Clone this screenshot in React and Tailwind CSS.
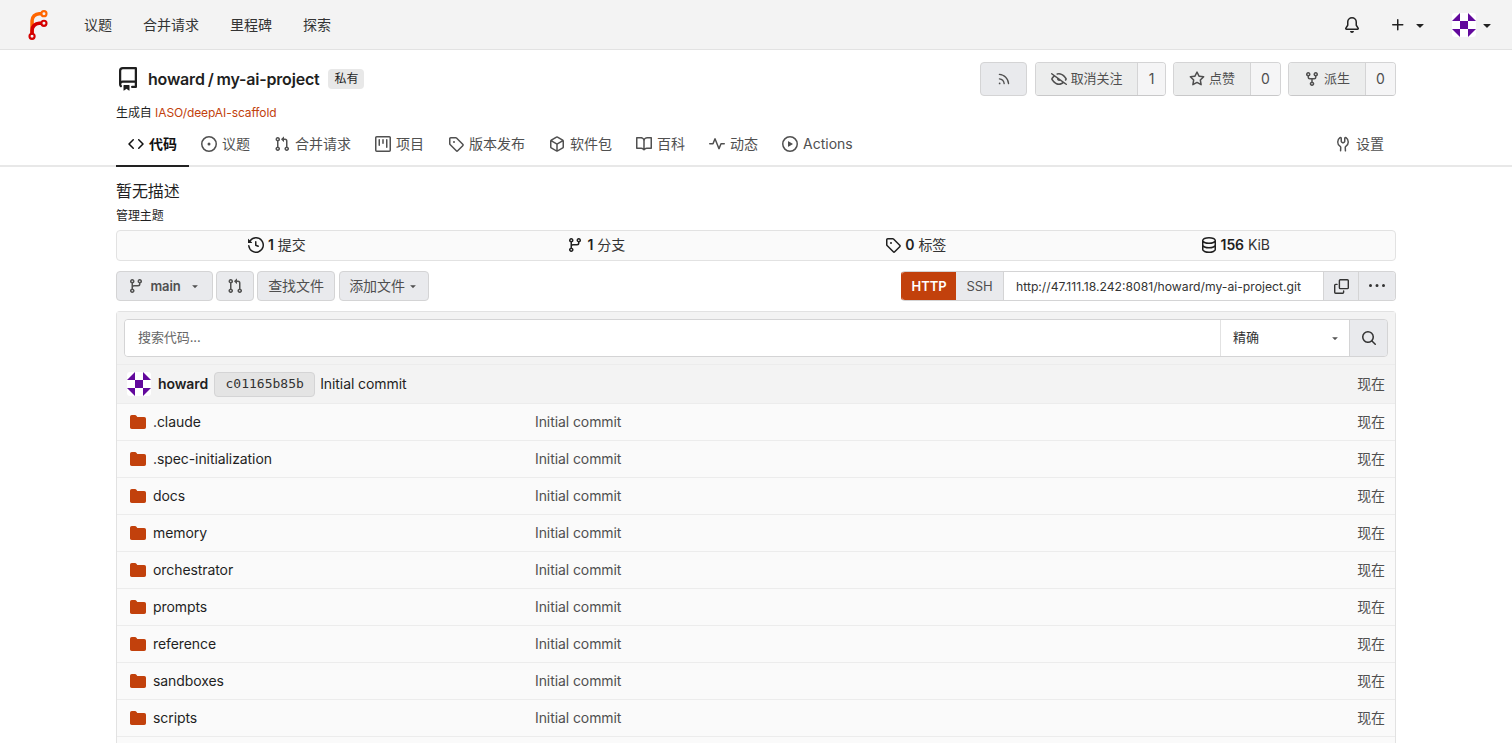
const paths = {
  repo: "M2 2.5A2.5 2.5 0 0 1 4.5 0h8.75a.75.75 0 0 1 .75.75v12.5a.75.75 0 0 1-.75.75h-2.5a.75.75 0 0 1 0-1.5h1.75v-2h-8a1 1 0 0 0-.714 1.7.75.75 0 1 1-1.072 1.05A2.5 2.5 0 0 1 2 11.5Zm10.5-1h-8a1 1 0 0 0-1 1v6.708A2.5 2.5 0 0 1 4.5 9h8ZM5 12.25a.25.25 0 0 1 .25-.25h3.5a.25.25 0 0 1 .25.25v3.25a.25.25 0 0 1-.4.2l-1.45-1.087a.25.25 0 0 0-.3 0L5.4 15.7a.25.25 0 0 1-.4-.2Z",
  code: "m11.28 3.22 4.25 4.25a.75.75 0 0 1 0 1.06l-4.25 4.25a.749.749 0 0 1-1.275-.326.749.749 0 0 1 .215-.734L13.94 8l-3.72-3.72a.749.749 0 0 1 .326-1.275.749.749 0 0 1 .734.215Zm-6.56 0a.751.751 0 0 1 1.042.018.751.751 0 0 1 .018 1.042L2.06 8l3.72 3.72a.749.749 0 0 1-.326 1.275.749.749 0 0 1-.734-.215L.47 8.53a.75.75 0 0 1 0-1.06Z",
  issue: "M8 9.5a1.5 1.5 0 1 0 0-3 1.5 1.5 0 0 0 0 3ZM8 0a8 8 0 1 1 0 16A8 8 0 0 1 8 0ZM1.5 8a6.5 6.5 0 1 0 13 0 6.5 6.5 0 0 0-13 0Z",
  pr: "M1.5 3.25a2.25 2.25 0 1 1 3 2.122v5.256a2.251 2.251 0 1 1-1.5 0V5.372A2.25 2.25 0 0 1 1.5 3.25Zm5.677-.177L9.573.677A.25.25 0 0 1 10 .854V2.5h1A2.5 2.5 0 0 1 13.5 5v5.628a2.251 2.251 0 1 1-1.5 0V5a1 1 0 0 0-1-1h-1v1.646a.25.25 0 0 1-.427.177L7.177 3.427a.25.25 0 0 1 0-.354ZM3.75 2.5a.75.75 0 1 0 0 1.5.75.75 0 0 0 0-1.5Zm0 9.5a.75.75 0 1 0 0 1.5.75.75 0 0 0 0-1.5Zm8.25.75a.75.75 0 1 0 1.5 0 .75.75 0 0 0-1.5 0Z",
  project: "M1.75 0h12.5C15.216 0 16 .784 16 1.75v12.5A1.75 1.75 0 0 1 14.25 16H1.75A1.75 1.75 0 0 1 0 14.25V1.75C0 .784.784 0 1.75 0ZM1.5 1.75v12.5c0 .138.112.25.25.25h12.5a.25.25 0 0 0 .25-.25V1.75a.25.25 0 0 0-.25-.25H1.75a.25.25 0 0 0-.25.25ZM11.75 3a.75.75 0 0 1 .75.75v7.5a.75.75 0 0 1-1.5 0v-7.5a.75.75 0 0 1 .75-.75Zm-8.25.75a.75.75 0 0 1 1.5 0v5.5a.75.75 0 0 1-1.5 0ZM8 3a.75.75 0 0 1 .75.75v3.5a.75.75 0 0 1-1.5 0v-3.5A.75.75 0 0 1 8 3Z",
  tag: "M1 7.775V2.75C1 1.784 1.784 1 2.75 1h5.025c.464 0 .91.184 1.238.513l6.25 6.25a1.75 1.75 0 0 1 0 2.474l-5.026 5.026a1.75 1.75 0 0 1-2.474 0l-6.25-6.25A1.752 1.752 0 0 1 1 7.775Zm1.5 0c0 .066.026.13.073.177l6.25 6.25a.25.25 0 0 0 .354 0l5.025-5.025a.25.25 0 0 0 0-.354l-6.25-6.25a.25.25 0 0 0-.177-.073H2.75a.25.25 0 0 0-.25.25ZM6 5a1 1 0 1 1 0 2 1 1 0 0 1 0-2Z",
  pkg: "m8.878.392 5.25 3.045c.54.314.872.89.872 1.514v6.098a1.75 1.75 0 0 1-.872 1.514l-5.25 3.045a1.75 1.75 0 0 1-1.756 0l-5.25-3.045A1.75 1.75 0 0 1 1 11.049V4.951c0-.624.332-1.201.872-1.514L7.122.392a1.75 1.75 0 0 1 1.756 0ZM7.875 1.69l-4.63 2.685L8 7.133l4.755-2.758-4.63-2.685a.248.248 0 0 0-.25 0ZM2.5 5.677v5.372c0 .09.047.171.125.216l4.625 2.683V8.432Zm6.25 8.271 4.625-2.683a.25.25 0 0 0 .125-.216V5.677L8.75 8.432Z",
  book: "M0 1.75A.75.75 0 0 1 .75 1h4.253c1.227 0 2.317.59 3 1.501A3.743 3.743 0 0 1 11.006 1h4.245a.75.75 0 0 1 .75.75v10.5a.75.75 0 0 1-.75.75h-4.507a2.25 2.25 0 0 0-1.591.659l-.622.621a.75.75 0 0 1-1.06 0l-.622-.621A2.25 2.25 0 0 0 5.258 13H.75a.75.75 0 0 1-.75-.75Zm7.251 10.324.004-5.073-.002-2.253A2.25 2.25 0 0 0 5.003 2.5H1.5v9h3.757a3.75 3.75 0 0 1 1.994.574ZM8.755 4.75l-.004 7.322a3.752 3.752 0 0 1 1.992-.572H14.5v-9h-3.495a2.25 2.25 0 0 0-2.25 2.25Z",
  pulse: "M6 2c.306 0 .582.187.696.471L10 10.731l1.304-3.26A.751.751 0 0 1 12 7h3.25a.75.75 0 0 1 0 1.5h-2.742l-1.812 4.528a.751.751 0 0 1-1.392 0L6 4.77 4.696 8.03A.75.75 0 0 1 4 8.5H.75a.75.75 0 0 1 0-1.5h2.742l1.812-4.529A.751.751 0 0 1 6 2Z",
  play: "M8 0a8 8 0 1 1 0 16A8 8 0 0 1 8 0ZM1.5 8a6.5 6.5 0 1 0 13 0 6.5 6.5 0 0 0-13 0Zm4.879-2.773 4.264 2.559a.25.25 0 0 1 0 .428l-4.264 2.559A.25.25 0 0 1 6 10.559V5.442a.25.25 0 0 1 .379-.215Z",
  tools: "M5.433 2.304A4.492 4.492 0 0 0 3.5 6c0 1.598.832 3.002 2.09 3.802.518.328.929.923.902 1.64v.008l-.164 3.337a.75.75 0 1 1-1.498-.073l.163-3.33c.002-.085-.05-.216-.207-.316A5.996 5.996 0 0 1 2 6a5.993 5.993 0 0 1 2.567-4.92 1.482 1.482 0 0 1 1.673-.04c.462.296.76.827.76 1.423v2.82c0 .082.041.16.11.206l.75.51a.25.25 0 0 0 .28 0l.75-.51A.249.249 0 0 0 9 5.282V2.463c0-.596.298-1.127.76-1.423a1.482 1.482 0 0 1 1.673.04A5.993 5.993 0 0 1 14 6a5.996 5.996 0 0 1-2.786 5.068c-.157.1-.209.23-.207.315l.163 3.33a.752.752 0 0 1-1.094.714.75.75 0 0 1-.404-.64l-.164-3.345c-.027-.717.384-1.312.902-1.64A4.495 4.495 0 0 0 12.5 6a4.492 4.492 0 0 0-1.933-3.696c-.024.017-.067.067-.067.16v2.818a1.75 1.75 0 0 1-.767 1.448l-.75.51a1.75 1.75 0 0 1-1.966 0l-.75-.51A1.75 1.75 0 0 1 5.5 5.282V2.463c0-.092-.043-.142-.067-.159Z",
  rss: "M2.002 2.725a.75.75 0 0 1 .797-.699C8.79 2.42 13.58 7.21 13.974 13.201a.75.75 0 0 1-1.497.098 10.502 10.502 0 0 0-9.776-9.776.747.747 0 0 1-.7-.798ZM2.84 7.05h-.002a7.002 7.002 0 0 1 6.113 6.111.75.75 0 0 1-1.49.178 5.503 5.503 0 0 0-4.8-4.8.75.75 0 0 1 .179-1.489ZM2 13a1 1 0 1 1 2 0 1 1 0 0 1-2 0Z",
  eyeClosed: "M.143 2.31a.75.75 0 0 1 1.047-.167l14.5 10.5a.75.75 0 1 1-.88 1.214l-2.248-1.628C11.346 13.19 9.792 14 8 14c-1.981 0-3.67-.992-4.933-2.078C1.797 10.832.88 9.577.43 8.9a1.619 1.619 0 0 1 0-1.797c.353-.533.995-1.42 1.868-2.305L.31 3.357A.75.75 0 0 1 .143 2.31Zm1.536 5.622A.12.12 0 0 0 1.657 8c0 .021.006.045.022.068.412.621 1.242 1.75 2.366 2.717C5.175 11.758 6.527 12.5 8 12.5c1.195 0 2.31-.488 3.29-1.191L9.063 9.695A2 2 0 0 1 6.058 7.52L3.529 5.688a14.207 14.207 0 0 0-1.85 2.244ZM8 3.5c-.516 0-1.017.09-1.499.251a.75.75 0 1 1-.473-1.423A6.207 6.207 0 0 1 8 2c1.981 0 3.67.992 4.933 2.078 1.27 1.091 2.187 2.345 2.637 3.023a1.62 1.62 0 0 1 0 1.798c-.11.166-.248.365-.41.587a.75.75 0 1 1-1.21-.887c.148-.201.272-.382.371-.53a.119.119 0 0 0 0-.137c-.412-.621-1.242-1.75-2.366-2.717C10.825 4.242 9.473 3.5 8 3.5Z",
  star: "M8 .25a.75.75 0 0 1 .673.418l1.882 3.815 4.21.612a.75.75 0 0 1 .416 1.279l-3.046 2.97.719 4.192a.751.751 0 0 1-1.088.791L8 12.347l-3.766 1.98a.75.75 0 0 1-1.088-.79l.72-4.194L.818 6.374a.75.75 0 0 1 .416-1.28l4.21-.611L7.327.668A.75.75 0 0 1 8 .25Zm0 2.445L6.615 5.5a.75.75 0 0 1-.564.41l-3.097.45 2.24 2.184a.75.75 0 0 1 .216.664l-.528 3.084 2.769-1.456a.75.75 0 0 1 .698 0l2.77 1.456-.53-3.084a.75.75 0 0 1 .216-.664l2.24-2.183-3.096-.45a.75.75 0 0 1-.564-.41L8 2.694Z",
  fork: "M5 5.372v.878c0 .414.336.75.75.75h4.5a.75.75 0 0 0 .75-.75v-.878a2.25 2.25 0 1 1 1.5 0v.878a2.25 2.25 0 0 1-2.25 2.25h-1.5v2.128a2.251 2.251 0 1 1-1.5 0V8.5h-1.5A2.25 2.25 0 0 1 3.5 6.25v-.878a2.25 2.25 0 1 1 1.5 0ZM5 3.25a.75.75 0 1 0-1.5 0 .75.75 0 0 0 1.5 0Zm6.75.75a.75.75 0 1 0 0-1.5.75.75 0 0 0 0 1.5Zm-3 8.75a.75.75 0 1 0-1.5 0 .75.75 0 0 0 1.5 0Z",
  history: "m.427 1.927 1.215 1.215a8.002 8.002 0 1 1-1.6 5.685.75.75 0 1 1 1.493-.154 6.5 6.5 0 1 0 1.18-4.458l1.358 1.358A.25.25 0 0 1 3.896 6H.25A.25.25 0 0 1 0 5.75V2.104a.25.25 0 0 1 .427-.177ZM7.75 4a.75.75 0 0 1 .75.75v2.992l2.028.812a.75.75 0 0 1-.557 1.392l-2.5-1A.751.751 0 0 1 7 8.25v-3.5A.75.75 0 0 1 7.75 4Z",
  branch: "M9.5 3.25a2.25 2.25 0 1 1 3 2.122V6A2.5 2.5 0 0 1 10 8.5H6a1 1 0 0 0-1 1v1.128a2.251 2.251 0 1 1-1.5 0V5.372a2.25 2.25 0 1 1 1.5 0v1.836A2.493 2.493 0 0 1 6 7h4a1 1 0 0 0 1-1v-.628A2.25 2.25 0 0 1 9.5 3.25Zm-6 0a.75.75 0 1 0 1.5 0 .75.75 0 0 0-1.5 0Zm8.25-.75a.75.75 0 1 0 0 1.5.75.75 0 0 0 0-1.5ZM4.25 12a.75.75 0 1 0 0 1.5.75.75 0 0 0 0-1.5Z",
  database: "M1 3.5c0-.626.292-1.165.7-1.59.406-.422.956-.767 1.579-1.041C4.525.32 6.195 0 8 0c1.805 0 3.475.32 4.722.869.622.274 1.172.62 1.578 1.04.408.426.7.965.7 1.591v9c0 .626-.292 1.165-.7 1.59-.406.422-.956.767-1.579 1.041C11.476 15.68 9.806 16 8 16c-1.805 0-3.475-.32-4.721-.869-.623-.274-1.173-.62-1.579-1.04-.408-.426-.7-.965-.7-1.591Zm1.5 0c0 .133.058.318.282.551.227.237.591.483 1.101.707C4.898 5.205 6.353 5.5 8 5.5c1.646 0 3.101-.295 4.118-.742.508-.224.873-.471 1.1-.708.224-.232.282-.417.282-.55 0-.133-.058-.318-.282-.551-.227-.237-.591-.483-1.101-.707C11.102 1.795 9.647 1.5 8 1.5c-1.646 0-3.101.295-4.118.742-.508.224-.873.471-1.1.708-.224.232-.282.417-.282.55Zm0 4.5c0 .133.058.318.282.551.227.237.591.483 1.101.707C4.898 9.705 6.353 10 8 10c1.646 0 3.101-.295 4.118-.742.508-.224.873-.471 1.1-.708.224-.232.282-.417.282-.55V5.724c-.241.15-.503.286-.778.407C11.475 6.68 9.805 7 8 7c-1.805 0-3.475-.32-4.721-.869a6.15 6.15 0 0 1-.779-.407Zm0 2.225V12.5c0 .133.058.318.282.55.227.237.592.484 1.1.708 1.016.447 2.471.742 4.118.742 1.647 0 3.102-.295 4.117-.742.51-.224.874-.47 1.101-.707.224-.233.282-.418.282-.551v-2.275c-.241.15-.503.285-.778.406-1.247.549-2.917.869-4.722.869-1.805 0-3.475-.32-4.721-.869a6.327 6.327 0 0 1-.779-.406Z",
  copy: "M0 6.75C0 5.784.784 5 1.75 5h1.5a.75.75 0 0 1 0 1.5h-1.5a.25.25 0 0 0-.25.25v7.5c0 .138.112.25.25.25h7.5a.25.25 0 0 0 .25-.25v-1.5a.75.75 0 0 1 1.5 0v1.5A1.75 1.75 0 0 1 9.25 16h-7.5A1.75 1.75 0 0 1 0 14.25ZM5 1.75C5 .784 5.784 0 6.75 0h7.5C15.216 0 16 .784 16 1.75v7.5A1.75 1.75 0 0 1 14.25 11h-7.5A1.75 1.75 0 0 1 5 9.25Zm1.75-.25a.25.25 0 0 0-.25.25v7.5c0 .138.112.25.25.25h7.5a.25.25 0 0 0 .25-.25v-7.5a.25.25 0 0 0-.25-.25Z",
  kebab: "M8 9a1.5 1.5 0 1 0 0-3 1.5 1.5 0 0 0 0 3ZM1.5 9a1.5 1.5 0 1 0 0-3 1.5 1.5 0 0 0 0 3Zm13 0a1.5 1.5 0 1 0 0-3 1.5 1.5 0 0 0 0 3Z",
  search: "M10.68 11.74a6 6 0 0 1-7.922-8.982 6 6 0 0 1 8.982 7.922l3.04 3.04a.749.749 0 0 1-.326 1.275.749.749 0 0 1-.734-.215ZM11.5 7a4.499 4.499 0 1 0-8.997 0A4.499 4.499 0 0 0 11.5 7Z",
  bell: "M8 16a2 2 0 0 0 1.985-1.75c.017-.137-.097-.25-.235-.25h-3.5c-.138 0-.252.113-.235.25A2 2 0 0 0 8 16ZM3 5a5 5 0 0 1 10 0v2.947c0 .05.015.098.042.139l1.703 2.555A1.519 1.519 0 0 1 13.482 13H2.518a1.516 1.516 0 0 1-1.263-2.36l1.703-2.554A.255.255 0 0 0 3 7.947Zm5-3.5A3.5 3.5 0 0 0 4.5 5v2.947c0 .346-.102.683-.294.97l-1.703 2.556a.017.017 0 0 0-.003.01l.001.006c0 .002.002.004.004.006l.006.004.007.001h10.964l.007-.001.006-.004.004-.006.001-.007a.017.017 0 0 0-.003-.01l-1.703-2.554a1.745 1.745 0 0 1-.294-.97V5A3.5 3.5 0 0 0 8 1.5Z",
  plus: "M7.75 2a.75.75 0 0 1 .75.75V7h4.25a.75.75 0 0 1 0 1.5H8.5v4.25a.75.75 0 0 1-1.5 0V8.5H2.75a.75.75 0 0 1 0-1.5H7V2.75A.75.75 0 0 1 7.75 2Z",
  folder: "M1.75 1A1.75 1.75 0 0 0 0 2.75v10.5C0 14.216.784 15 1.75 15h12.5A1.75 1.75 0 0 0 16 13.25v-8.5A1.75 1.75 0 0 0 14.25 3H7.5a.25.25 0 0 1-.2-.1l-.9-1.2C6.07 1.26 5.55 1 5 1H1.75Z",
  caret: "m4.427 7.427 3.396 3.396a.25.25 0 0 0 .354 0l3.396-3.396A.25.25 0 0 0 11.396 7H4.604a.25.25 0 0 0-.177.427Z",
};

function Icon({ name, className = "w-4 h-4" }) {
  return (
    <svg viewBox="0 0 16 16" fill="currentColor" className={`shrink-0 ${className}`}>
      <path d={paths[name]} />
    </svg>
  );
}

function Logo() {
  return (
    <svg viewBox="0 0 212 212" className="w-[30px] h-[30px]">
      <g transform="translate(6,6)" fill="none">
        <path d="M58 168 v-98 a50 50 0 0 1 50-50 h20" stroke="#ff6600" strokeWidth="25" />
        <path d="M58 168 v-30 a50 50 0 0 1 50-50 h20" stroke="#d40000" strokeWidth="25" />
        <circle cx="142" cy="20" r="18" stroke="#ff6600" strokeWidth="15" />
        <circle cx="142" cy="88" r="18" stroke="#d40000" strokeWidth="15" />
        <circle cx="58" cy="180" r="18" stroke="#d40000" strokeWidth="15" />
      </g>
    </svg>
  );
}

function Avatar({ className }) {
  return (
    <svg viewBox="0 0 24 24" className={`shrink-0 rounded-[3px] ${className}`}>
      <rect width="24" height="24" fill="#fff" />
      <g fill="#62089c">
        <rect x="8" y="8" width="8" height="8" />
        <path d="M0 8 8 0v8ZM16 0l8 8h-8ZM0 16h8v8ZM16 16h8l-8 8Z" />
      </g>
    </svg>
  );
}

const Caret = ({ className = "w-4 h-4" }) => <Icon name="caret" className={className} />;

const tabs = [
  ["issue", "议题"],
  ["pr", "合并请求"],
  ["project", "项目"],
  ["tag", "版本发布"],
  ["pkg", "软件包"],
  ["book", "百科"],
  ["pulse", "动态"],
  ["play", "Actions"],
];

const folders = [
  ".claude",
  ".spec-initialization",
  "docs",
  "memory",
  "orchestrator",
  "prompts",
  "reference",
  "sandboxes",
  "scripts",
];

const btn =
  "flex items-center justify-center bg-[#e9eaed] border border-[#d4d4d5] text-[#4f4f4f] text-[13px]";

function CountButton({ icon, label, count, width, countWidth = "w-[29px]" }) {
  return (
    <div className="flex h-[34px] rounded-[4px] border border-[#d4d4d5] border-b-[#c8c8c9] overflow-hidden text-[13px] text-[#4f4f4f]">
      <div className={`flex items-center justify-center gap-1 bg-[#eceded] border-r border-[#d4d4d5] ${width}`}>
        <Icon name={icon} className="w-4 h-4" />
        <span>{label}</span>
      </div>
      <div className={`flex items-center justify-center bg-[#f5f5f6] text-sm ${countWidth}`}>{count}</div>
    </div>
  );
}

function Stat({ icon, n, label }) {
  return (
    <div className="flex-1 flex items-center justify-center gap-1 text-sm text-[#1f1f1f]">
      <Icon name={icon} />
      <span className="font-semibold">{n}</span>
      <span className="text-[#333]">{label}</span>
    </div>
  );
}

function FolderRow({ name }) {
  return (
    <div className="h-[37px] shrink-0 flex items-center bg-[#fafafa] border-t border-[#ececec] pl-[13px] pr-[10px] text-sm">
      <Icon name="folder" className="w-4 h-4 text-[#c2410c]" />
      <span className="ml-[7px] w-[382px] text-[#1f1f1f]">{name}</span>
      <span className="flex-1 text-[#505050]">Initial commit</span>
      <span className="text-[#505050]">现在</span>
    </div>
  );
}

export default function App() {
  return (
    <div
      className="h-screen overflow-hidden bg-white text-[#1f1f1f] tracking-[-0.08px]"
      style={{ fontFamily: 'Inter, "Noto Sans CJK SC", sans-serif' }}
    >
      <nav className="h-[50px] bg-[#f3f3f3] border-b border-[#e2e2e2] flex items-center pl-[23px] pr-[17px] text-sm text-[#333] tracking-normal">
        <Logo />
        <div className="flex items-center gap-[31px] ml-[31px]">
          <span>议题</span>
          <span>合并请求</span>
          <span>里程碑</span>
          <span>探索</span>
        </div>
        <div className="ml-auto flex items-center text-[#222]">
          <Icon name="bell" />
          <span className="flex items-center ml-[30px]">
            <Icon name="plus" />
            <Caret className="w-4 h-4 ml-[6px]" />
          </span>
          <span className="flex items-center ml-[24px]">
            <Avatar className="w-6 h-6" />
            <Caret className="w-4 h-4 ml-[3px]" />
          </span>
        </div>
      </nav>

      <div className="border-b-2 border-[#e8e8e8]">
        <div className="w-[1280px] mx-auto">
          <div className="flex items-center justify-between pt-[12px]">
            <div className="flex items-center">
              <Icon name="repo" className="w-6 h-6 text-[#1f1f1f]" />
              <span className="ml-[8px] flex gap-[3px] text-base font-semibold tracking-[-0.2px]">
                <span>howard</span>
                <span>/</span>
                <span>my-ai-project</span>
              </span>
              <span className="ml-[9px] w-9 h-5 flex items-center justify-center rounded bg-[#e8e8e8] text-xs">私有</span>
            </div>
            <div className="flex items-center gap-[7px]">
              <div className={`${btn} w-[47px] h-[34px] rounded-[4px] mr-px`}>
                <Icon name="rss" className="w-3.5 h-3.5" />
              </div>
              <CountButton icon="eyeClosed" label="取消关注" count="1" width="w-[102px]" countWidth="w-[27px]" />
              <CountButton icon="star" label="点赞" count="0" width="w-[77px]" />
              <CountButton icon="fork" label="派生" count="0" width="w-[77px]" />
            </div>
          </div>
          <div className="mt-[8px] text-xs leading-[18px]">
            生成自 <span className="text-[#c2410c]">IASO/deepAI-scaffold</span>
          </div>
          <div className="flex items-center h-[41px] mt-[2px] pb-[2px] text-sm text-[#505050] tracking-normal">
            <div className="relative h-full w-[73px] flex items-center justify-center gap-[5px] font-semibold text-[#111]">
              <Icon name="code" />
              <span>代码</span>
              <span className="absolute left-0 right-0 -bottom-[4px] h-[2px] bg-[#222]" />
            </div>
            <div className="ml-[12px] flex items-center gap-[24px]">
              {tabs.map(([icon, label]) => (
                <div key={label} className="flex items-center gap-[5px]">
                  <Icon name={icon} />
                  <span>{label}</span>
                </div>
              ))}
            </div>
            <div className="ml-auto mr-[12px] flex items-center gap-[5px]">
              <Icon name="tools" />
              <span>设置</span>
            </div>
          </div>
        </div>
      </div>

      <div className="w-[1280px] mx-auto">
        <div className="mt-[12px] text-base leading-[24px]">暂无描述</div>
        <div className="mt-[4px] text-xs leading-[18px]">管理主题</div>

        <div className="mt-[5px] h-[31px] pb-[2px] flex items-center bg-[#fafafa] border border-[#e2e2e2] rounded-[4px]">
          <Stat icon="history" n="1" label="提交" />
          <Stat icon="branch" n="1" label="分支" />
          <Stat icon="tag" n="0" label="标签" />
          <Stat icon="database" n="156" label="KiB" />
        </div>

        <div className="mt-[10px] h-[30px] flex items-center text-sm text-[#505050]">
          <div className={`${btn} w-[97px] h-[30px] rounded-[4px] gap-[6px] !text-[#505050]`}>
            <Icon name="branch" />
            <span className="font-semibold text-[13px]">main</span>
            <Caret className="w-3 h-3 ml-[2px]" />
          </div>
          <div className={`${btn} w-[38px] h-[30px] rounded-[4px] ml-[3px]`}>
            <Icon name="pr" />
          </div>
          <div className={`${btn} w-[78px] h-[30px] rounded-[4px] ml-[3px] !text-sm`}>查找文件</div>
          <div className={`${btn} w-[90px] h-[30px] rounded-[4px] ml-[4px] !text-sm gap-[2px]`}>
            添加文件
            <Caret className="w-3 h-3" />
          </div>

          <div className="ml-auto w-[495px] h-[30px] flex rounded-[4px] border border-[#d4d4d5] border-l-[#c2410c] overflow-hidden text-[13px]">
            <div className="w-[54px] flex items-center justify-center bg-[#c2410c] text-white font-semibold -my-px">
              HTTP
            </div>
            <div className="w-[48px] flex items-center justify-center bg-[#e9eaed] text-[#505050] border-r border-[#d4d4d5]">
              SSH
            </div>
            <div className="flex-1 flex items-center pl-[12px] pt-px bg-white text-[12.2px] tracking-normal text-[#333]">
              http://47.111.18.242:8081/howard/my-ai-project.git
            </div>
            <div className="w-[35px] flex items-center justify-center bg-[#e9eaed] border-l border-[#d4d4d5] text-[#333]">
              <Icon name="copy" className="w-[15px] h-[15px]" />
            </div>
            <div className="w-[37px] flex items-center justify-center bg-[#e9eaed] border-l border-[#d4d4d5] text-[#333]">
              <Icon name="kebab" />
            </div>
          </div>
        </div>

        <div className="mt-[10px] border-x border-t border-[#e2e2e2] rounded-t-[4px] flex flex-col">
          <div className="h-[52px] bg-[#f3f3f3] px-[7px] flex items-center">
            <div className="flex-1 h-[38px] flex rounded-[4px] border border-[#d4d4d5] overflow-hidden text-[13px]">
              <div className="flex-1 bg-white flex items-center pl-[13px] text-[#666]">搜索代码...</div>
              <div className="w-[129px] bg-white border-l border-[#e2e2e2] flex items-center pl-[12px] pr-[8px] justify-between text-[#333]">
                精确
                <Caret className="w-3 h-3 text-[#555]" />
              </div>
              <div className="w-[38px] bg-[#e9eaed] border-l border-[#d4d4d5] flex items-center justify-center text-[#333]">
                <Icon name="search" />
              </div>
            </div>
          </div>
          <div className="h-[39px] bg-[#f3f3f3] border-t border-[#ececec] pl-[10px] pr-[10px] flex items-center text-sm">
            <Avatar className="w-6 h-6" />
            <span className="ml-[7px] font-semibold">howard</span>
            <span
              className="ml-[6px] w-[101px] h-[25px] flex items-center justify-center rounded-[4px] bg-[#e4e4e4] border border-[#d4d4d5] text-[13px] tracking-normal text-[#333]"
              style={{ fontFamily: '"DejaVu Sans Mono", monospace' }}
            >
              c01165b85b
            </span>
            <span className="ml-[5px]">Initial commit</span>
            <span className="ml-auto text-[#505050]">现在</span>
          </div>
          {folders.map((name) => (
            <FolderRow key={name} name={name} />
          ))}
          <div className="h-[37px] shrink-0 bg-[#fafafa] border-t border-[#ececec]" />
        </div>
      </div>
    </div>
  );
}
